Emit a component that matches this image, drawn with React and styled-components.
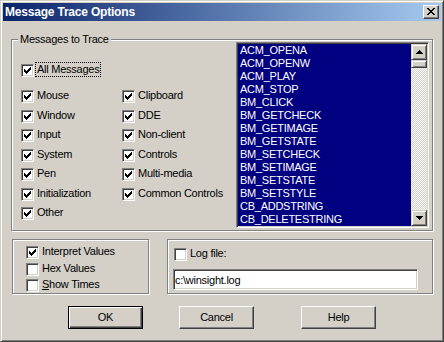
import React from 'react';
import styled, { createGlobalStyle } from 'styled-components';

const Global = createGlobalStyle`
  html, body { margin: 0; padding: 0; background: #d4d0c8; }
  body { font-family: "Liberation Sans", Arial, sans-serif; font-size: 11px; }
`;

const FONT = `"Liberation Sans", Arial, sans-serif`;

const Window = styled.div`
  width: 444px;
  height: 342px;
  box-sizing: border-box;
  border: 1px solid;
  border-color: #d4d0c8 #404040 #404040 #d4d0c8;
  box-shadow: inset 1px 1px 0 #fff, inset -1px -1px 0 #808080;
  padding: 2px;
  background: #d4d0c8;
  display: flex;
  flex-direction: column;
  font-family: ${FONT};
  font-size: 11px;
  letter-spacing: -0.25px;
  color: #000;
`;

const TitleBar = styled.div`
  height: 18px;
  flex: none;
  display: flex;
  align-items: center;
  padding: 0 2px 0 2px;
  background: linear-gradient(to right, #0a246a, #a6caf0);
`;

const TitleText = styled.div`
  flex: 1;
  color: #fff;
  font-weight: bold;
  font-size: 12px;
  letter-spacing: -0.2px;
  line-height: 18px;
  white-space: nowrap;
`;

const CloseButton = styled.div`
  width: 16px;
  height: 14px;
  box-sizing: border-box;
  border: 1px solid;
  border-color: #fff #404040 #404040 #fff;
  box-shadow: inset -1px -1px 0 #808080;
  background: #d4d0c8;
  display: flex;
  align-items: center;
  justify-content: center;
  padding: 0 1px 1px 0;
`;

const Body = styled.div`
  flex: 1;
  display: flex;
  flex-direction: column;
  padding: 18px 8px 0 8px;
`;

const Group = styled.div`
  position: relative;
  box-sizing: border-box;
  border: 1px solid #808080;
  box-shadow: inset 1px 1px 0 #fff, 1px 1px 0 #fff;
`;

const TopGroup = styled(Group)`
  height: 192px;
  display: flex;
  padding: 2px 3px 2px 0;
`;

const Legend = styled.span`
  position: absolute;
  top: -7px;
  left: 6px;
  padding: 0 2px;
  line-height: 13px;
  background: #d4d0c8;
  white-space: nowrap;
`;

const LeftColumn = styled.div`
  flex: 1;
  padding: 20px 0 0 9px;
  display: flex;
  flex-direction: column;
  align-items: flex-start;
`;

const CheckGrid = styled.div`
  margin-top: 11px;
  display: grid;
  grid-auto-flow: column;
  grid-template-rows: repeat(${p => p.$rows}, ${p => p.$rowHeight});
  grid-template-columns: ${p => p.$cols || 'auto'};
  align-items: start;
  justify-items: start;
`;

const CheckRow = styled.label`
  display: flex;
  align-items: flex-start;
  white-space: nowrap;
  margin-left: ${p => p.$indent || 0};
`;

const Box = styled.span`
  width: 13px;
  height: 13px;
  margin-top: 2px;
  flex: none;
  box-sizing: border-box;
  border: 1px solid;
  border-color: #808080 #fff #fff #808080;
  box-shadow: inset 1px 1px 0 #404040, inset -1px -1px 0 #d4d0c8;
  background: #fff;
  display: flex;
  align-items: center;
  justify-content: center;
`;

const Label = styled.span`
  margin-left: 1px;
  padding: 0 1px;
  line-height: 13px;
  border: 1px dotted ${p => (p.$focus ? '#000' : 'transparent')};
`;

const ListBox = styled.div`
  width: 193px;
  height: 186px;
  flex: none;
  box-sizing: border-box;
  border: 1px solid;
  border-color: #808080 #fff #fff #808080;
  box-shadow: inset 1px 1px 0 #404040, inset -1px -1px 0 #d4d0c8;
  padding: 1px;
  display: flex;
  background: #d4d0c8;
`;

const Items = styled.div`
  flex: 1;
  background: #000080;
  overflow: hidden;
`;

const Item = styled.div`
  color: #fff;
  line-height: 13px;
  padding-left: 2px;
  white-space: nowrap;
`;

const ScrollBar = styled.div`
  width: 16px;
  flex: none;
  display: flex;
  flex-direction: column;
`;

const ScrollButton = styled.div`
  height: ${p => p.$h}px;
  flex: none;
  box-sizing: border-box;
  border: 1px solid;
  border-color: #d4d0c8 #404040 #404040 #d4d0c8;
  box-shadow: inset 1px 1px 0 #fff, inset -1px -1px 0 #808080;
  background: #d4d0c8;
  display: flex;
  align-items: center;
  justify-content: center;
`;

const Track = styled.div`
  flex: 1;
  background: repeating-conic-gradient(#fff 0 25%, #d4d0c8 0 50%) 0 0 / 2px 2px;
`;

const LowerRow = styled.div`
  margin-top: 8px;
  margin-left: 1px;
  display: flex;
  gap: 18px;
`;

const OptionsGroup = styled(Group)`
  width: 137px;
  height: 55px;
  padding: 4px 0 0 13px;
`;

const LogGroup = styled(Group)`
  flex: 1;
  height: 55px;
  padding: 6px 0 0 5px;
  display: flex;
  flex-direction: column;
  align-items: flex-start;
`;

const TextField = styled.input`
  margin-top: 8px;
  width: 245px;
  height: 21px;
  box-sizing: border-box;
  border: 1px solid;
  border-color: #808080 #fff #fff #808080;
  box-shadow: inset 1px 1px 0 #404040, inset -1px -1px 0 #d4d0c8;
  background: #fff;
  padding: 0 0 0 1px;
  outline: none;
  font-family: ${FONT};
  font-size: 11px;
  letter-spacing: -0.25px;
  line-height: 17px;
  color: #000;
`;

const ButtonRow = styled.div`
  margin-top: 12px;
  padding-left: 57px;
  display: flex;
`;

const Button = styled.div`
  width: 75px;
  height: 23px;
  box-sizing: border-box;
  margin-left: ${p => p.$gap || 0}px;
  border: 1px solid;
  border-color: ${p => (p.$default ? '#000' : '#fff #404040 #404040 #fff')};
  box-shadow: ${p =>
    p.$default
      ? 'inset 1px 1px 0 #fff, inset -1px -1px 0 #404040, inset -2px -2px 0 #808080'
      : 'inset -1px -1px 0 #808080'};
  background: #d4d0c8;
  display: flex;
  align-items: center;
  justify-content: center;
  line-height: 13px;
  padding-bottom: 1px;
`;

const pixels = rows =>
  rows
    .map(([x, y, w]) => `M${x} ${y}h${w}v1h-${w}z`)
    .join('');

const CHECK = pixels([
  [6, 0, 1],
  [5, 1, 2],
  [0, 2, 1], [4, 2, 3],
  [0, 3, 2], [3, 3, 3],
  [0, 4, 5],
  [1, 5, 3],
  [2, 6, 1],
]);

const CLOSE = pixels([
  [0, 0, 2], [6, 0, 2],
  [1, 1, 2], [5, 1, 2],
  [2, 2, 4],
  [3, 3, 2],
  [2, 4, 4],
  [1, 5, 2], [5, 5, 2],
  [0, 6, 2], [6, 6, 2],
]);

const UP = pixels([[3, 0, 1], [2, 1, 3], [1, 2, 5], [0, 3, 7]]);
const DOWN = pixels([[0, 0, 7], [1, 1, 5], [2, 2, 3], [3, 3, 1]]);

const Glyph = ({ d, w, h }) => (
  <svg width={w} height={h} viewBox={`0 0 ${w} ${h}`} shapeRendering="crispEdges" style={{ display: 'block' }}>
    <path d={d} fill="#000" />
  </svg>
);

const Check = ({ checked, focus, children, indent }) => (
  <CheckRow $indent={indent}>
    <Box>{checked && <Glyph d={CHECK} w={7} h={7} />}</Box>
    <Label $focus={focus}>{children}</Label>
  </CheckRow>
);

const messages = [
  'ACM_OPENA', 'ACM_OPENW', 'ACM_PLAY', 'ACM_STOP', 'BM_CLICK', 'BM_GETCHECK',
  'BM_GETIMAGE', 'BM_GETSTATE', 'BM_SETCHECK', 'BM_SETIMAGE', 'BM_SETSTATE',
  'BM_SETSTYLE', 'CB_ADDSTRING', 'CB_DELETESTRING',
];

const categories = [
  'Mouse', 'Window', 'Input', 'System', 'Pen', 'Initialization', 'Other',
  'Clipboard', 'DDE', 'Non-client', 'Controls', 'Multi-media', 'Common Controls',
];

export default function App() {
  return (
    <>
      <Global />
      <Window>
        <TitleBar>
          <TitleText>Message Trace Options</TitleText>
          <CloseButton>
            <Glyph d={CLOSE} w={8} h={7} />
          </CloseButton>
        </TitleBar>
        <Body>
          <TopGroup>
            <Legend>Messages to Trace</Legend>
            <LeftColumn>
              <Check checked focus>All Messages</Check>
              <CheckGrid $rows={7} $rowHeight="19.5px" $cols="101px auto">
                {categories.map(c => (
                  <Check key={c} checked>{c}</Check>
                ))}
              </CheckGrid>
            </LeftColumn>
            <ListBox>
              <Items>
                {messages.map(m => (
                  <Item key={m}>{m}</Item>
                ))}
              </Items>
              <ScrollBar>
                <ScrollButton $h={16}>
                  <Glyph d={UP} w={7} h={4} />
                </ScrollButton>
                <ScrollButton $h={8} />
                <Track />
                <ScrollButton $h={16}>
                  <Glyph d={DOWN} w={7} h={4} />
                </ScrollButton>
              </ScrollBar>
            </ListBox>
          </TopGroup>
          <LowerRow>
            <OptionsGroup>
              <CheckGrid $rows={3} $rowHeight="16.5px" style={{ marginTop: 0 }}>
                <Check checked>Interpret Values</Check>
                <Check>Hex Values</Check>
                <Check>
                  <u>S</u>how Times
                </Check>
              </CheckGrid>
            </OptionsGroup>
            <LogGroup>
              <Check indent="1px">Log file:</Check>
              <TextField readOnly defaultValue="c:\winsight.log" />
            </LogGroup>
          </LowerRow>
          <ButtonRow>
            <Button $default>OK</Button>
            <Button $gap={36}>Cancel</Button>
            <Button $gap={47}>Help</Button>
          </ButtonRow>
        </Body>
      </Window>
    </>
  );
}
